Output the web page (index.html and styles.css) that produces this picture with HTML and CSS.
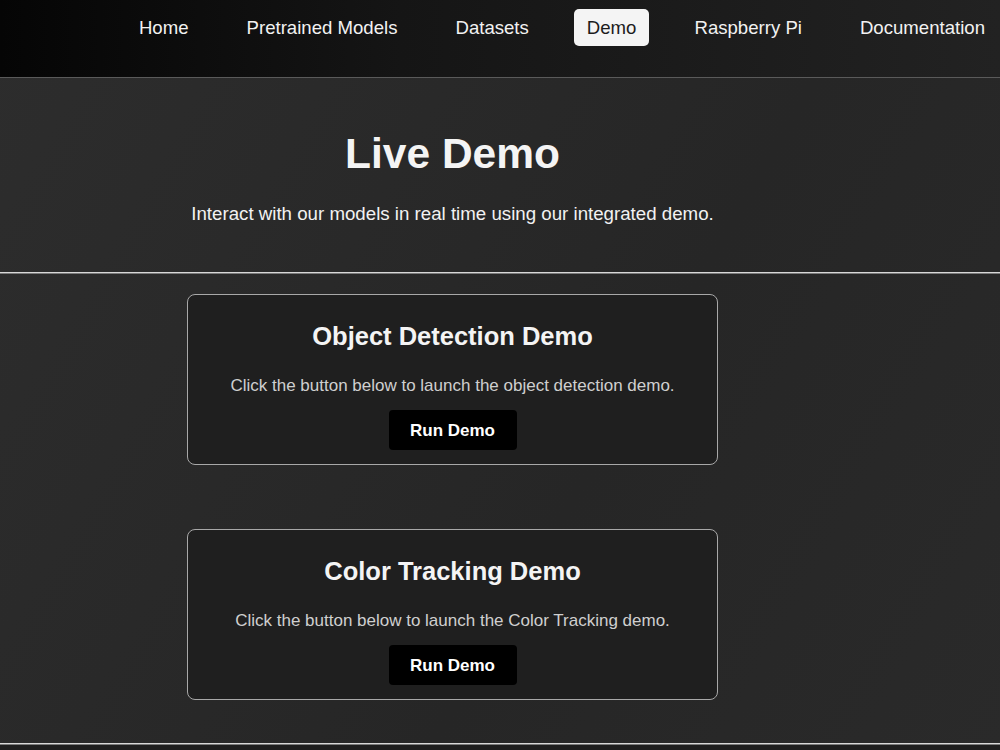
FILE: index.html
```html
<!DOCTYPE html>
<html lang="en">

<head>
    <meta charset="UTF-8">
    <meta name="viewport" content="width=device-width, initial-scale=1.0">
    <title>Live Demo</title>

    <link rel="stylesheet" href="styles.css">
</head>

<body>

    <header class="topbar">
        <nav class="nav">
            <a href="#" class="nav-link">Home</a>
            <a href="#" class="nav-link">Pretrained Models</a>
            <a href="#" class="nav-link">Datasets</a>
            <a href="#" class="nav-link active">Demo</a>
            <a href="#" class="nav-link">Raspberry Pi</a>
            <a href="#" class="nav-link">Documentation</a>
        </nav>
    </header>

    <section class="hero">
        <div class="inner">
            <h1>Live Demo</h1>
            <p>Interact with our models in real time using our integrated demo.</p>
        </div>
    </section>

    <div class="divider"></div>

    <main class="demos">
        <div class="inner">
            <div class="demo-card">
                <h2>Object Detection Demo</h2>
                <p>Click the button below to launch the object detection demo.</p>
                <button class="run-btn">Run Demo</button>
            </div>

            <div class="demo-card">
                <h2>Color Tracking Demo</h2>
                <p>Click the button below to launch the Color Tracking demo.</p>
                <button class="run-btn">Run Demo</button>
            </div>
        </div>
    </main>

    <div class="divider"></div>

    <footer class="footer"></footer>

</body>

</html>
```

FILE: styles.css
```css
* {
    box-sizing: border-box;
}

html,
body,
h1,
h2,
p {
    margin: 0;
    padding: 0;
}

body {
    font-family: "Liberation Sans", Arial, sans-serif;
    background: linear-gradient(120deg, #2d2d2d 0%, #262626 60%, #2a2a2a 100%);
    color: white;
    min-height: 750px;
}

.topbar {
    height: 78px;
    background: linear-gradient(90deg, #050505 0%, #151515 40%, #222222 100%);
    border-bottom: 1px solid #5a5a5a;
}

.nav {
    display: flex;
    justify-content: flex-end;
    align-items: center;
    gap: 32px;
    padding: 9px 2px 0 0;
}

.nav-link {
    font-size: 18.6px;
    line-height: 21px;
    padding: 8px 13px;
    color: #f2f2f2;
    text-decoration: none;
    border-radius: 5px;
    white-space: nowrap;
}

.nav-link.active {
    background-color: #f4f4f4;
    color: #1c1c1c;
}

.inner {
    width: 905px;
    display: flex;
    flex-direction: column;
    align-items: center;
    text-align: center;
}

.hero {
    padding: 52px 0 47px;
}

.hero h1 {
    font-size: 42.5px;
    line-height: 48px;
    font-weight: bold;
    color: #f4f4f4;
    margin-bottom: 25px;
}

.hero p {
    font-size: 18.7px;
    line-height: 22px;
    color: #f2f2f2;
}

.divider {
    height: 2px;
    border-top: 1px solid #d8d8d8;
    border-bottom: 1px solid #7a7a7a;
}

.demos {
    padding: 20px 0 43px;
}

.demos .inner {
    gap: 64px;
}

.demo-card {
    width: 531px;
    height: 171px;
    background-color: #1f1f1f;
    border: 1px solid #a8a8a8;
    border-radius: 8px;
    padding: 26px 20px 0;
    display: flex;
    flex-direction: column;
    align-items: center;
}

.demo-card h2 {
    font-size: 25.5px;
    line-height: 30px;
    font-weight: bold;
    color: #f4f4f4;
}

.demo-card p {
    font-size: 17px;
    line-height: 19px;
    color: #cfcfcf;
    margin-top: 25px;
}

.run-btn {
    margin-top: 15px;
    font-family: "Liberation Sans", Arial, sans-serif;
    font-size: 17px;
    font-weight: bold;
    line-height: 19px;
    color: white;
    background-color: black;
    border: 0;
    border-radius: 4px;
    width: 128px;
    height: 40px;
    padding: 0;
    white-space: nowrap;
}

.footer {
    height: 10px;
    background-color: #1e1e1e;
}
```
